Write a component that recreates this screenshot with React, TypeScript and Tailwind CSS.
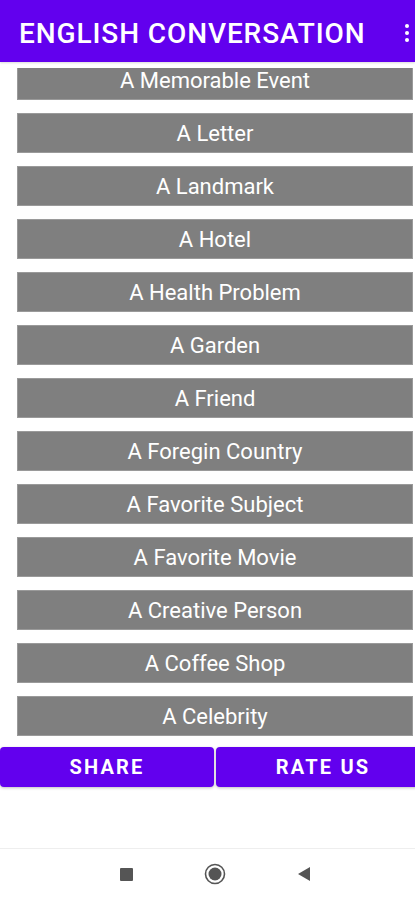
import React from "react";

const items = [
  "A Memorable Event",
  "A Letter",
  "A Landmark",
  "A Hotel",
  "A Health Problem",
  "A Garden",
  "A Friend",
  "A Foregin Country",
  "A Favorite Subject",
  "A Favorite Movie",
  "A Creative Person",
  "A Coffee Shop",
  "A Celebrity",
];

export default function App() {
  return (
    <div
      className="w-[415px] h-[900px] bg-white flex flex-col overflow-hidden"
      style={{ fontFamily: "Roboto, 'Liberation Sans', sans-serif" }}
    >
      <header className="h-[62px] bg-[#6200ee] flex items-center justify-between pl-[19px] pr-[6px] shadow-[0_1px_2px_rgba(0,0,0,0.15)] shrink-0">
        <h1 className="text-white text-[28px] font-medium leading-none tracking-[0.9px] pt-[6px]">
          ENGLISH CONVERSATION
        </h1>
        <div className="flex flex-col gap-[3px] items-center pt-[3px]">
          <span className="w-[4px] h-[4px] bg-white rounded-full" />
          <span className="w-[4px] h-[4px] bg-white rounded-full" />
          <span className="w-[4px] h-[4px] bg-white rounded-full" />
        </div>
      </header>
      <div className="mt-[6px] h-[673px] overflow-hidden shrink-0">
        <div className="-mt-[8px] flex flex-col gap-[13px] pl-[17px] pr-[2px]">
          {items.map((t) => (
            <div
              key={t}
              className="h-[40px] bg-[#7f7f7f] border border-[#9a9a9a] flex items-center justify-center text-white text-[22px] leading-none pt-[1px]"
            >
              {t}
            </div>
          ))}
        </div>
      </div>
      <div className="flex gap-[2px] mt-[6px] shrink-0 w-[430px]">
        <button className="w-[214px] h-[40px] bg-[#6200ee] rounded-[4px] text-white text-[20px] font-bold tracking-[2.2px] flex items-center justify-center shadow-[0_1px_3px_rgba(0,0,0,0.25)]">
          SHARE
        </button>
        <button className="w-[214px] h-[40px] bg-[#6200ee] rounded-[4px] text-white text-[20px] font-bold tracking-[2.2px] flex items-center justify-center shadow-[0_1px_3px_rgba(0,0,0,0.25)]">
          RATE US
        </button>
      </div>
      <div className="mt-[61px] border-t border-[#eeeeee] h-[52px] flex items-center shrink-0">
        <div className="flex items-center pl-[120px] gap-[71px] pb-[1px]">
          <span className="w-[13px] h-[13px] bg-[#555555] rounded-[1px]" />
          <svg width="22" height="22" viewBox="0 0 22 22">
            <circle cx="11" cy="11" r="9.5" fill="none" stroke="#555555" strokeWidth="1.6" />
            <circle cx="11" cy="11" r="6.5" fill="#555555" />
          </svg>
          <svg width="14" height="16" viewBox="0 0 14 16">
            <polygon points="13,1 13,15 1,8" fill="#555555" />
          </svg>
        </div>
      </div>
    </div>
  );
}
